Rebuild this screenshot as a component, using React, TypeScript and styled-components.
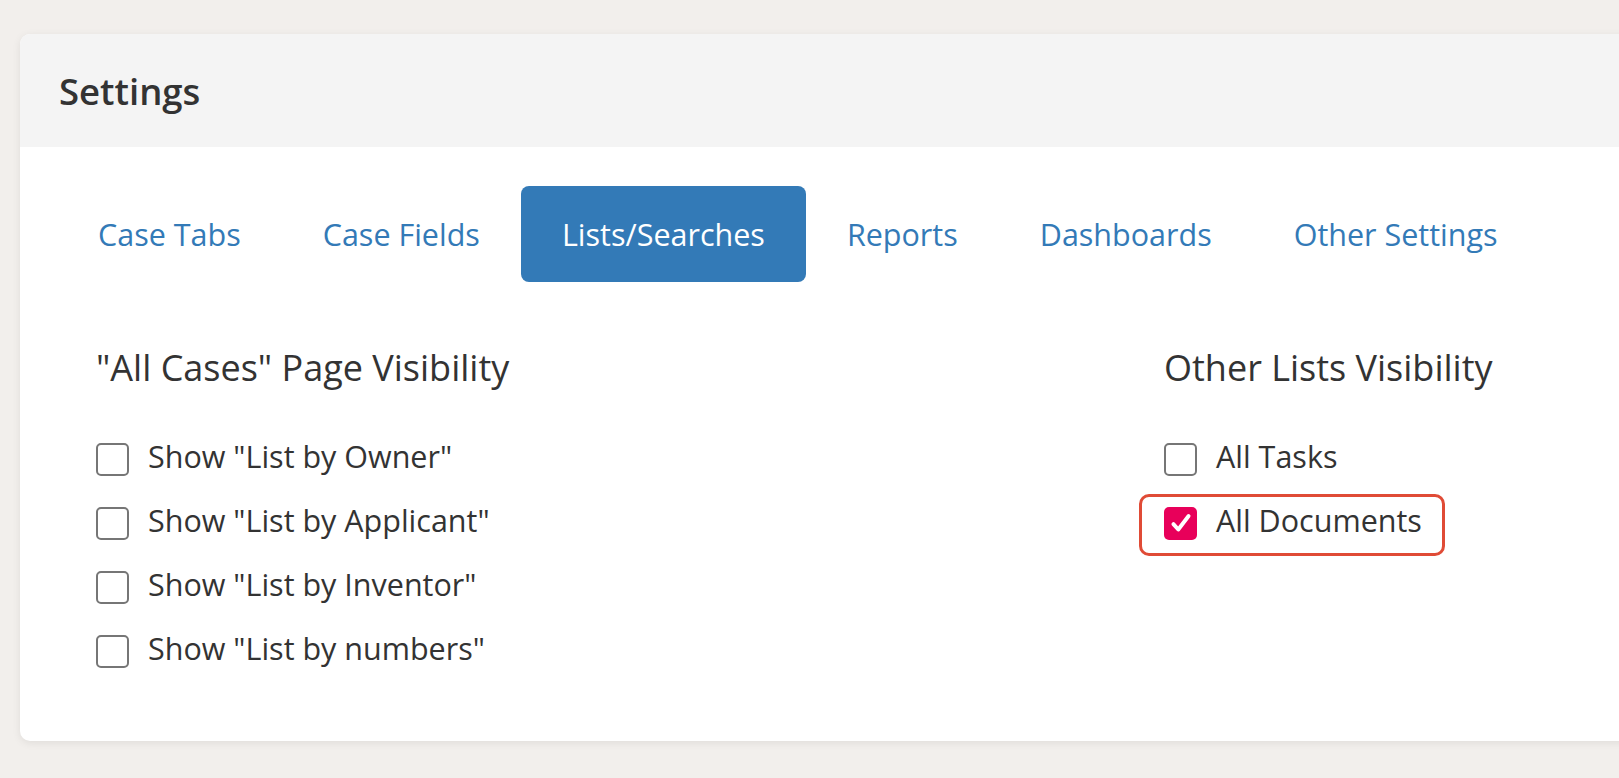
import React from "react";
import styled, { createGlobalStyle } from "styled-components";

const Global = createGlobalStyle`
  html, body { margin: 0; padding: 0; background: #f2efec; overflow: hidden; }
  body { font-family: "Open Sans", "Noto Sans", sans-serif; color: #333; }
  #root { width: 1619px; height: 778px; }
`;

const Page = styled.div`
  padding: 34px 0 0 20px;
`;

const Card = styled.div`
  width: 1650px;
  background: #fff;
  border-radius: 10px;
  box-shadow: 0 2px 8px rgba(0, 0, 0, 0.08);
  overflow: hidden;
`;

const Header = styled.div`
  height: 113px;
  background: #f4f4f4;
  display: flex;
  align-items: center;
  padding-left: 39px;
`;

const Title = styled.h1`
  margin: 0;
  font-size: 36.5px;
  font-weight: 600;
  color: #333;
`;

const Body = styled.div`
  padding: 39px 37px 61px;
`;

const Tabs = styled.div`
  display: flex;
`;

const Tab = styled.div<{ $active?: boolean }>`
  height: 96px;
  padding: 0 41px;
  display: flex;
  align-items: center;
  border-radius: 8px;
  font-size: 30.5px;
  background: ${(p) => (p.$active ? "#337ab7" : "transparent")};
  color: ${(p) => (p.$active ? "#fff" : "#337ab7")};
`;

const Columns = styled.div`
  display: flex;
  padding: 62px 0 0 39px;
`;

const Column = styled.div<{ $width?: number }>`
  width: ${(p) => (p.$width ? `${p.$width}px` : "auto")};
  display: flex;
  flex-direction: column;
`;

const Heading = styled.h2`
  margin: 0 0 32px;
  font-size: 36px;
  font-weight: 400;
  color: #333;
  line-height: 48px;
`;

const Option = styled.label<{ $highlight?: boolean }>`
  display: flex;
  align-items: center;
  gap: 19px;
  height: 64px;
  font-size: 30.5px;
  color: #333;
  position: relative;
  ${(p) =>
    p.$highlight &&
    `&::after {
      content: "";
      position: absolute;
      left: -25px;
      top: 6px;
      width: 306px;
      height: 62px;
      box-sizing: border-box;
      border: 3px solid #e04b36;
      border-radius: 10px;
    }`}
`;

const Box = styled.span<{ $checked?: boolean }>`
  width: 33px;
  height: 33px;
  box-sizing: border-box;
  border-radius: 5px;
  border: ${(p) => (p.$checked ? "none" : "2px solid #767676")};
  background: ${(p) => (p.$checked ? "#e8005a" : "#fff")};
  display: flex;
  align-items: center;
  justify-content: center;
  flex-shrink: 0;
  margin-top: 6px;
`;

const Check = () => (
  <svg width="26" height="26" viewBox="0 0 24 24" fill="none" stroke="#fff" strokeWidth="3.6" strokeLinecap="round" strokeLinejoin="round">
    <path d="M5 13l4.5 5L19 5.5" />
  </svg>
);

const tabs = ["Case Tabs", "Case Fields", "Lists/Searches", "Reports", "Dashboards", "Other Settings"];

const left = ['Show "List by Owner"', 'Show "List by Applicant"', 'Show "List by Inventor"', 'Show "List by numbers"'];

export default function App() {
  return (
    <>
      <Global />
      <Page>
        <Card>
          <Header>
            <Title>Settings</Title>
          </Header>
          <Body>
            <Tabs>
              {tabs.map((t) => (
                <Tab key={t} $active={t === "Lists/Searches"}>
                  {t}
                </Tab>
              ))}
            </Tabs>
            <Columns>
              <Column $width={1068}>
                <Heading>"All Cases" Page Visibility</Heading>
                {left.map((l) => (
                  <Option key={l}>
                    <Box />
                    {l}
                  </Option>
                ))}
              </Column>
              <Column>
                <Heading>Other Lists Visibility</Heading>
                <Option>
                  <Box />
                  All Tasks
                </Option>
                <Option $highlight>
                  <Box $checked>
                    <Check />
                  </Box>
                  All Documents
                </Option>
              </Column>
            </Columns>
          </Body>
        </Card>
      </Page>
    </>
  );
}
